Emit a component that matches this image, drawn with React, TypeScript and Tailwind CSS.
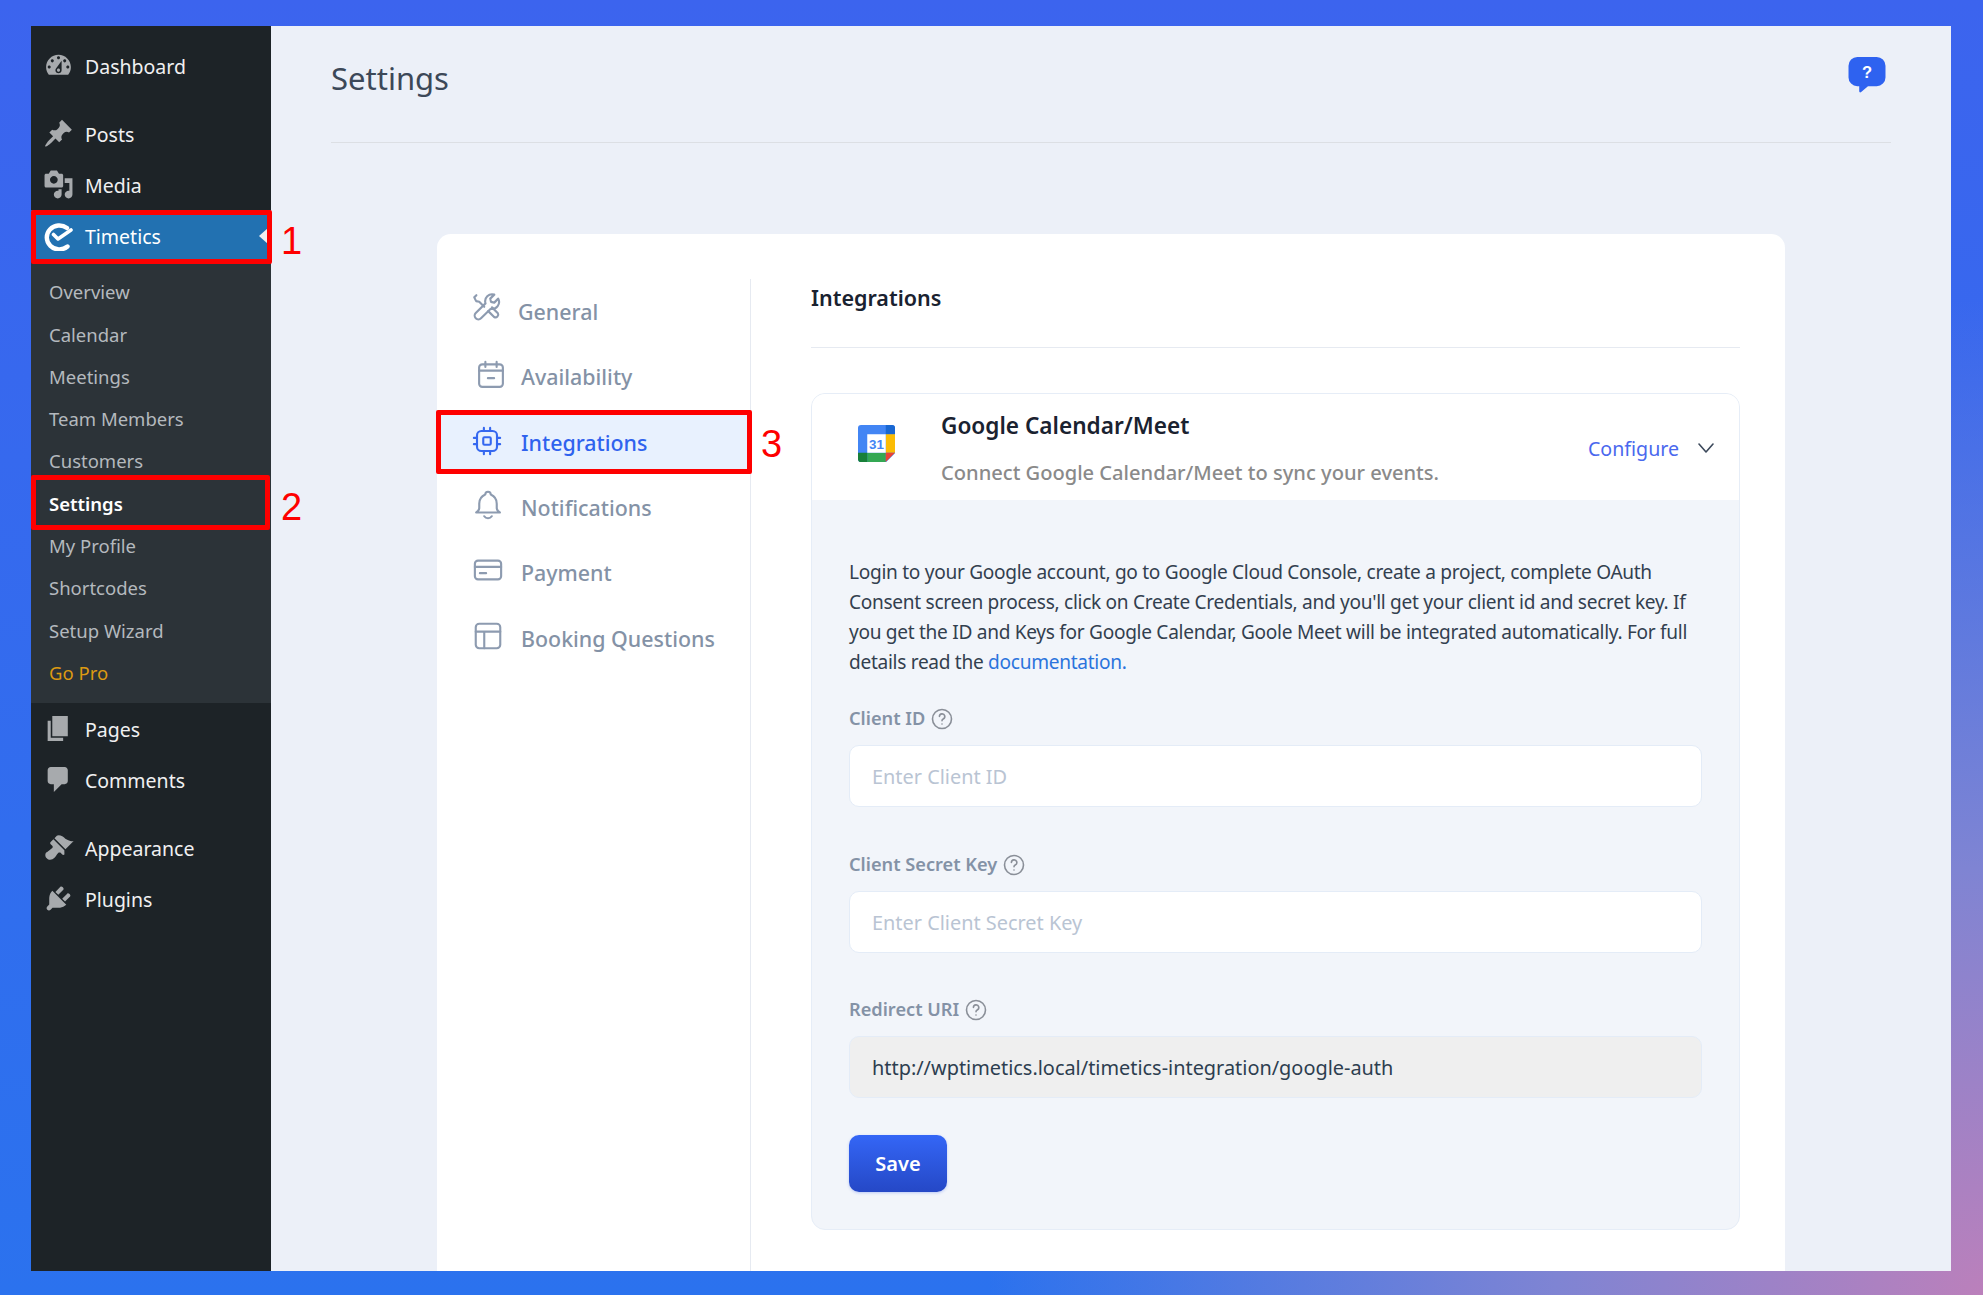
import React from 'react';

// WordPress dashicons paths, 20x20
const dash = {
  dashboard:
    'M3.76 16h12.48c1.1-1.37 1.76-3.11 1.76-5 0-4.42-3.58-8-8-8s-8 3.58-8 8c0 1.89.66 3.63 1.76 5zM10 4c.55 0 1 .45 1 1s-.45 1-1 1-1-.45-1-1 .45-1 1-1zM6 6c.55 0 1 .45 1 1s-.45 1-1 1-1-.45-1-1 .45-1 1-1zm8 0c.55 0 1 .45 1 1s-.45 1-1 1-1-.45-1-1 .45-1 1-1zm-5.37 5.55L12 7v6c0 1.1-.9 2-2 2s-2-.9-2-2c0-.57.24-1.08.63-1.45zM4 10c.55 0 1 .45 1 1s-.45 1-1 1-1-.45-1-1 .45-1 1-1zm12 0c.55 0 1 .45 1 1s-.45 1-1 1-1-.45-1-1 .45-1 1-1zm-5 3c0-.55-.45-1-1-1s-1 .45-1 1 .45 1 1 1 1-.45 1-1z',
  post: 'M10.44 3.02l1.82-1.82 6.36 6.35-1.83 1.82c-1.05-.68-2.48-.57-3.41.36l-.75.75c-.92.93-1.04 2.35-.35 3.41l-1.83 1.82-2.41-2.41-2.8 2.79c-.42.42-3.38 2.71-3.8 2.29s1.86-3.39 2.28-3.81l2.79-2.79L4.1 9.36l1.83-1.82c1.05.69 2.48.57 3.4-.36l.75-.75c.93-.92 1.05-2.35.36-3.41z',
  media:
    'M13 11V4c0-.55-.45-1-1-1h-1.67L9 1H5L3.67 3H2c-.55 0-1 .45-1 1v7c0 .55.45 1 1 1h10c.55 0 1-.45 1-1zM7 4.5c1.38 0 2.5 1.12 2.5 2.5S8.38 9.5 7 9.5 4.5 8.38 4.5 7 5.62 4.5 7 4.5zM14 6h5v10.5c0 1.38-1.12 2.5-2.5 2.5S14 17.88 14 16.5s1.12-2.5 2.5-2.5c.17 0 .34.02.5.05V9h-3V6zm-4 8.05V13h2v3.5c0 1.38-1.12 2.5-2.5 2.5S7 17.88 7 16.5 8.12 14 9.5 14c.17 0 .34.02.5.05z',
  page: 'M6 15V2h10v13H6zm-1 1h8v2H3V5h2v11z',
  comments: 'M5 2h9c1.1 0 2 .9 2 2v7c0 1.1-.9 2-2 2h-2l-5 5v-5H5c-1.1 0-2-.9-2-2V4c0-1.1.9-2 2-2z',
  appearance:
    'M14.48 11.06L7.41 3.99l1.5-1.5c.5-.56 2.3-.47 3.51.32 1.21.8 1.43 1.28 2.91 2.1 1.18.64 2.45 1.26 4.45.85zm-.71.71L6.7 4.7 4.93 6.47c-.39.39-.39 1.02 0 1.41l1.06 1.06c.39.39.39 1.03 0 1.42-.6.6-1.43 1.11-2.21 1.69-.35.26-.7.53-1.01.84C1.43 13.23.91 15.39 2.42 17c1.51 1.58 3.66 1.01 4.99-.32.31-.31.58-.66.84-1.01.58-.78 1.09-1.61 1.69-2.21.39-.39 1.03-.39 1.42 0l1.06 1.06c.39.39 1.02.39 1.41 0z',
  plugins:
    'M13.11 4.36L9.87 7.6 8 5.73l3.24-3.24c.35-.34 1.05-.2 1.56.32.52.51.66 1.21.31 1.55zm-8 1.77l.91-1.12 9.01 9.01-1.19.84c-.71.71-2.63 1.16-3.82 1.16H6.14L4.9 17.26c-.59.59-1.54.59-2.12 0-.59-.58-.59-1.53 0-2.12l1.24-1.24v-3.88c0-1.13.4-3.19 1.09-3.89zm7.26 3.97l3.24-3.24c.34-.35 1.04-.21 1.55.31.52.51.66 1.21.31 1.55l-3.24 3.25z',
};

const DashIcon = ({ d }: { d: string }) => (
  <svg viewBox="0 0 20 20" className="w-[31px] h-[31px] fill-[#a7aaad]">
    <path d={d} />
  </svg>
);

const TopItem = ({ icon, label }: { icon: string; label: string }) => (
  <div className="h-[51px] flex items-center">
    <span className="w-[54px] flex justify-center">
      <DashIcon d={icon} />
    </span>
    <span className="text-[#f0f0f1] text-[19.5px] mt-[2px]">{label}</span>
  </div>
);

const subItems = ['Overview', 'Calendar', 'Meetings', 'Team Members', 'Customers', 'Settings', 'My Profile', 'Shortcodes', 'Setup Wizard', 'Go Pro'];

const Sidebar = () => (
  <aside className="w-[240px] shrink-0 bg-[#1d2327] pt-[14px]">
    <TopItem icon={dash.dashboard} label="Dashboard" />
    <div className="h-[17px]" />
    <TopItem icon={dash.post} label="Posts" />
    <TopItem icon={dash.media} label="Media" />
    <div className="relative h-[52px] bg-[#2271b1] flex items-center">
      <span className="w-[54px] flex justify-center">
        <svg viewBox="0 0 30 30" className="w-[30px] h-[30px]" fill="none" stroke="#fff" strokeLinecap="round" strokeLinejoin="round">
          <path d="M24.5 25.5A12.5 12 0 1 1 24 7" strokeWidth="4.4" />
          <path d="M10.5 13.5l4.5 4.5L28 9" strokeWidth="3.6" />
        </svg>
      </span>
      <span className="text-white text-[19.5px] mt-[2px]">Timetics</span>
      <span className="absolute right-[3px] top-1/2 -translate-y-1/2 border-y-[8px] border-y-transparent border-r-[9px] border-r-[#f0f0f1]" />
      <span className="absolute left-0 right-[-1px] top-0 bottom-[-2px] border-[5px] border-[#fe0000] rounded-[2px]" />
      <span className="absolute left-[250px] top-[8px] text-[38px] leading-[46px] text-[#fe0000] font-['Liberation_Sans',sans-serif]">1</span>
    </div>
    <div className="bg-[#2c3338] pt-[8px] pb-[10px]">
      {subItems.map((s) => (
        <div key={s} className="relative h-[42.3px] flex items-center pl-[18px] text-[18.5px]">
          {s === 'Settings' ? (
            <>
              <span className="text-white font-semibold mt-[2px]">{s}</span>
              <span className="absolute left-0 right-[1px] top-[-6px] bottom-[-6px] border-[5px] border-[#fe0000] rounded-[2px]" />
              <span className="absolute left-[250px] top-[3px] text-[38px] leading-[46px] text-[#fe0000] font-['Liberation_Sans',sans-serif]">2</span>
            </>
          ) : s === 'Go Pro' ? (
            <span className="text-[#dd9a12] mt-[2px]">{s}</span>
          ) : (
            <span className="text-[#b4b9be] mt-[2px]">{s}</span>
          )}
        </div>
      ))}
    </div>
    <TopItem icon={dash.page} label="Pages" />
    <TopItem icon={dash.comments} label="Comments" />
    <div className="h-[17px]" />
    <TopItem icon={dash.appearance} label="Appearance" />
    <TopItem icon={dash.plugins} label="Plugins" />
  </aside>
);

const Ic = ({ children, active }: { children: React.ReactNode; active?: boolean }) => (
  <svg
    viewBox="0 0 24 24"
    className={`w-[30px] h-[30px] ${active ? 'stroke-[#3568f0]' : 'stroke-[#8d9bb0]'}`}
    fill="none"
    strokeWidth="1.7"
    strokeLinecap="round"
    strokeLinejoin="round"
  >
    {children}
  </svg>
);

const navItems: { label: string; icon: React.ReactNode; iconCls: string; textCls: string }[] = [
  {
    label: 'General',
    iconCls: 'ml-[35px] -mt-[8px]',
    textCls: 'ml-[16px]',
    icon: (
      <>
        <path d="M21 4.5l-3.2 3.2-2.6-.6-.6-2.6 3.2-3.2a5.6 5.6 0 0 0-7 7L3 16a2.8 2.8 0 0 0 4.2 4.2L15 12.6a5.6 5.6 0 0 0 6-8.1z" />
        <path d="M3.5 1.8L1.8 3.5l1.5 3 2.5.5 4 4M13 14.5l4.7 4.7a2.2 2.2 0 0 0 3-3L16 11.5" />
      </>
    ),
  },
  {
    label: 'Availability',
    iconCls: 'ml-[39px] -mt-[3px]',
    textCls: 'ml-[15px]',
    icon: (
      <>
        <rect x="2.5" y="3.5" width="19" height="18" rx="2.5" />
        <path d="M7.5 1.5v4M16.5 1.5v4M2.5 8.5h19M9.5 14.5h5" />
      </>
    ),
  },
  {
    label: 'Integrations',
    iconCls: 'ml-[35px] -mt-[2px]',
    textCls: 'ml-[19px]',
    icon: (
      <>
        <rect x="4" y="4" width="16" height="16" rx="3.5" />
        <rect x="9" y="9" width="6" height="6" rx="1" />
        <path d="M1.5 9.5h2.5M1.5 14.5h2.5M20 9.5h2.5M20 14.5h2.5M9.5 1.5V4M14.5 1.5V4M9.5 20v2.5M14.5 20v2.5" />
      </>
    ),
  },
  {
    label: 'Notifications',
    iconCls: 'ml-[36px] -mt-[5px]',
    textCls: 'ml-[18px]',
    icon: (
      <>
        <path d="M9.8 3.6a2.2 2.2 0 1 1 4.4 0A8 8 0 0 1 19 11v3.5a4.5 4.5 0 0 0 2.5 3.5h-19A4.5 4.5 0 0 0 5 14.5V11a8 8 0 0 1 4.8-7.4" />
        <path d="M9 21a3.6 3.6 0 0 0 6 0" />
      </>
    ),
  },
  {
    label: 'Payment',
    iconCls: 'ml-[36px] -mt-[5px]',
    textCls: 'ml-[18px]',
    icon: (
      <>
        <rect x="1.5" y="4.5" width="21" height="15" rx="2.5" />
        <path d="M1.5 9.5h21M5.5 14.5h5" />
      </>
    ),
  },
  {
    label: 'Booking Questions',
    iconCls: 'ml-[36px] -mt-[5px]',
    textCls: 'ml-[18px]',
    icon: (
      <>
        <rect x="2.2" y="2.2" width="19.6" height="19.6" rx="2.8" />
        <path d="M2.2 8.5h19.6M9 8.5v13.3" />
      </>
    ),
  },
];

const NavList = () => (
  <nav className="w-[314px] shrink-0 border-r border-[#e6eaf1] mt-[45px]">
    {navItems.map((n) => {
      const active = n.label === 'Integrations';
      return (
        <div key={n.label} className="relative h-[65.3px] flex items-center">
          {active && <span className="absolute left-0 right-0 top-[4px] h-[56px] bg-[#e8f1fe]" />}
          <span className={`relative flex ${n.iconCls}`}>
            <Ic active={active}>{n.icon}</Ic>
          </span>
          <span className={`relative mt-[1px] text-[21.4px] font-medium ${n.textCls} ${active ? 'text-[#2f62ee]' : 'text-[#8492a6]'}`}>{n.label}</span>
          {active && (
            <>
              <span className="absolute left-[-1px] right-[-2px] top-[0px] h-[64px] border-[5px] border-[#fe0000] rounded-[2px]" />
              <span className="absolute left-[324px] top-[11px] text-[38px] leading-[46px] text-[#fe0000] font-['Liberation_Sans',sans-serif]">3</span>
            </>
          )}
        </div>
      );
    })}
  </nav>
);

const HelpDot = () => (
  <svg viewBox="0 0 24 24" className="w-[24px] h-[24px] ml-[5px] stroke-[#8a8f98]" fill="none" strokeWidth="1.6" strokeLinecap="round" strokeLinejoin="round">
    <circle cx="12" cy="12" r="9.5" />
    <path d="M9.4 9.4a2.7 2.7 0 1 1 3.8 2.6c-.8.4-1.2 1-1.2 1.8" />
    <path d="M12 17h.01" />
  </svg>
);

const Field = ({ label, value, placeholder }: { label: string; value?: string; placeholder?: string }) => (
  <div>
    <div className="h-[24px] flex items-center text-[18.2px] font-semibold text-[#8492a6]">
      {label}
      <HelpDot />
    </div>
    <div
      className={`mt-[14px] h-[62px] flex items-center pl-[22px] pt-[2px] rounded-[10px] border border-[#e4ecf7] text-[19.9px] ${
        value ? 'bg-[#efefef] text-[#2d3e50]' : 'bg-white text-[#b9c4d3]'
      }`}
    >
      {value || placeholder}
    </div>
  </div>
);

const Accordion = () => (
  <div className="mt-[46px] rounded-[14px] border border-[#e6edf7] overflow-hidden bg-[#f2f5fa]">
    <div className="h-[106px] bg-white flex items-center relative">
      <svg viewBox="0 0 36 36" className="w-[37px] h-[37px] ml-[46px] mt-[-8px] shrink-0">
        <rect x="0" y="0" width="36" height="36" rx="3" fill="#4285f4" />
        <path d="M27 0h6a3 3 0 0 1 3 3v6h-9z" fill="#1967d2" />
        <rect x="27" y="9" width="9" height="18" fill="#fbbc04" />
        <rect x="9" y="27" width="18" height="9" fill="#34a853" />
        <path d="M0 27h9v9H3a3 3 0 0 1-3-3z" fill="#188038" />
        <path d="M27 27h9l-9 9z" fill="#ea4335" />
        <path d="M36 27.5V36h-8.5z" fill="#fff" />
        <rect x="9" y="9" width="18" height="18" fill="#fff" />
        <text x="18" y="23" textAnchor="middle" fontSize="13" fontWeight="700" fill="#4285f4" fontFamily="'Liberation Sans',sans-serif">31</text>
      </svg>
      <div className="ml-[46px] flex-1 self-start">
        <div className="mt-[16px] text-[22.6px] leading-[32px] font-semibold text-[#1a2230]">Google Calendar/Meet</div>
        <div className="mt-[16px] text-[20.1px] leading-[30px] font-medium text-[#8a8a8a]">Connect Google Calendar/Meet to sync your events.</div>
      </div>
      <div className="flex items-center mr-[25px] mt-[3px] text-[19.6px] text-[#4a68ee]">
        Configure
        <svg viewBox="0 0 16 10" className="w-[16px] h-[10px] ml-[19px]" fill="none" stroke="#3d4a5c" strokeWidth="1.6" strokeLinecap="round" strokeLinejoin="round">
          <path d="M1 1l7 8 7-8" />
        </svg>
      </div>
    </div>
    <div className="px-[37px] pt-[57px] pb-[37px]">
      <p className="text-[19.1px] tracking-[-0.3px] leading-[30px] text-[#33404f] max-w-[846px]">
        Login to your Google account, go to Google Cloud Console, create a project, complete OAuth Consent screen process, click on Create Credentials, and you'll get your client id and secret key. If you get the ID and Keys for Google Calendar, Goole Meet will be integrated automatically. For full details read the <span className="text-[#2b74dd]">documentation.</span>
      </p>
      <div className="mt-[30px]">
        <Field label="Client ID" placeholder="Enter Client ID" />
      </div>
      <div className="mt-[46px]">
        <Field label="Client Secret Key" placeholder="Enter Client Secret Key" />
      </div>
      <div className="mt-[45px]">
        <Field label="Redirect URI" value="http://wptimetics.local/timetics-integration/google-auth" />
      </div>
      <button className="mt-[37px] w-[98px] h-[57px] rounded-[10px] bg-[linear-gradient(#3466f6,#2548c6)] text-white text-[20px] font-semibold shadow-[0_1px_3px_rgba(60,100,240,0.3)]">
        Save
      </button>
    </div>
  </div>
);

export default function App() {
  return (
    <div className="w-[1983px] h-[1295px] overflow-hidden bg-[radial-gradient(circle_at_100%_100%,#bb80bb_0%,#7f84d3_18%,rgba(90,120,230,0)_42%),linear-gradient(#3c64ee,#2b72ee)] pt-[26px] pl-[31px] font-['Noto_Sans',sans-serif]">
      <div className="w-[1920px] h-[1245px] flex overflow-hidden">
        <Sidebar />
        <main className="flex-1 bg-[#ecf0f8] px-[60px]">
          <header className="h-[117px] border-b border-[#dcdfe4] flex justify-between">
            <h1 className="mt-[30px] text-[31px] leading-[44px] text-[#3c4858]">Settings</h1>
            <svg viewBox="0 0 38 37" className="w-[38px] h-[36px] mt-[31px] mr-[5px]">
              <path d="M9 0h20a9 9 0 0 1 9 9v12a9 9 0 0 1-9 9H20l-7 6c-1 .8-2 .4-2-1v-5H9a9 9 0 0 1-9-9V9a9 9 0 0 1 9-9z" fill="#2e62f0" />
              <text x="19" y="21.5" textAnchor="middle" fontSize="17" fontWeight="700" fill="#fff" fontFamily="'Liberation Sans',sans-serif">?</text>
            </svg>
          </header>
          <section className="mt-[91px] ml-[106px] w-[1348px] h-[1100px] bg-white rounded-[14px] flex">
            <NavList />
            <div className="flex-1 pl-[60px] pr-[45px]">
              <div className="h-[114px] pt-[48px] border-b border-[#e6eaf1] -mb-px text-[21.5px] leading-[32px] font-semibold text-[#1a2230]">Integrations</div>
              <Accordion />
            </div>
          </section>
        </main>
      </div>
    </div>
  );
}
